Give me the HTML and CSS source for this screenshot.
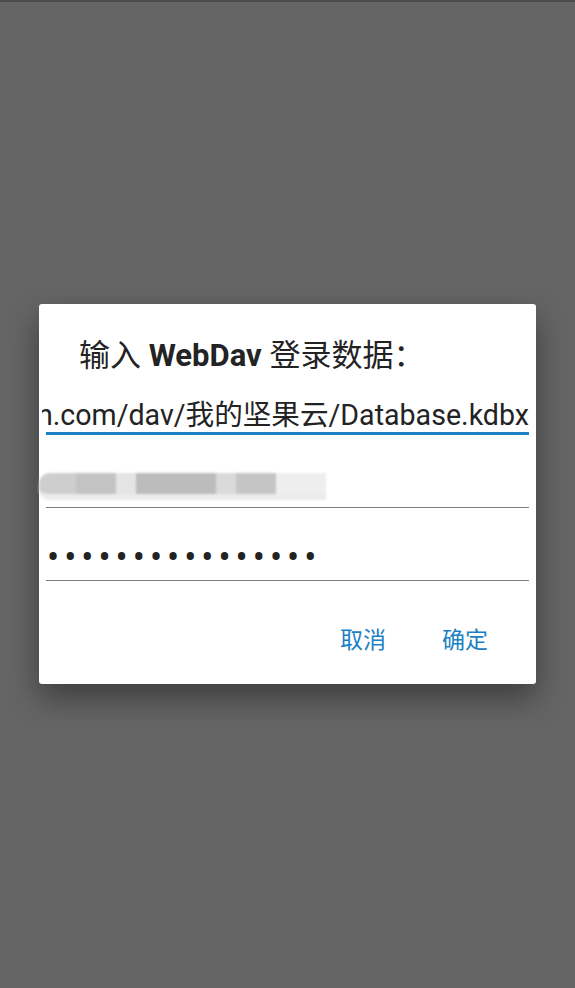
FILE: index.html
```html
<!DOCTYPE html>
<html lang="zh-CN">
<head>
    <meta charset="UTF-8">
    <meta name="viewport" content="width=device-width, initial-scale=1.0">
    <title>WebDav 登录</title>
    <link rel="stylesheet" href="styles.css">
</head>
<body>
<div class="status-strip"></div>
<main class="scrim">
    <form class="dialog" autocomplete="off">
        <h1 class="dialog-title">输入 <b>WebDav</b> 登录数据：</h1>
        <div class="field field-active">
            <div class="field-text">https://dav.jianguoyun.com/dav/我的坚果云/Database.kdbx</div>
        </div>
        <div class="field">
            <!-- 用户名已打码 -->
            <div class="mosaic">
                <span class="m1"></span>
                <span class="m2"></span>
                <span class="m3"></span>
                <span class="m4"></span>
                <span class="m5"></span>
                <span class="m6"></span>
                <span class="m7"></span>
            </div>
        </div>
        <div class="field field-password">
            <div class="field-text">••••••••••••••••</div>
        </div>
        <div class="actions">
            <button type="button" class="btn">取消</button>
            <button type="submit" class="btn">确定</button>
        </div>
    </form>
</main>
</body>
</html>
```

FILE: styles.css
```css
:root {
    --scrim: #656565;
    --accent: #1b80c4;
    --text: #232323;
    --line: #7a7a7a;
}
body {
    margin: 0;
    background: var(--scrim);
    font-family: Roboto, "Noto Sans CJK SC", sans-serif;
    min-height: 988px;
}
.status-strip {
    height: 2px;
    background: #4b4b4b;
}
.scrim {
    padding: 302px 39px 0 39px;
}
.dialog {
    background: #fff;
    border-radius: 3px;
    box-shadow: 0 14px 32px rgba(0,0,0,0.4);
    height: 380px;
    box-sizing: border-box;
    display: flex;
    flex-direction: column;
}
.dialog-title {
    margin: 30px 0 0 0;
    padding-left: 40px;
    font-size: 31px;
    font-weight: 400;
    line-height: 44px;
    color: var(--text);
}
.dialog-title b {
    font-weight: 700;
}
.field {
    margin: 0 7px;
    padding-top: 32px;
    height: 40px;
    border-bottom: 1px solid var(--line);
}
.field-text {
    display: flex;
    justify-content: flex-end;
    white-space: nowrap;
    font-size: 28.6px;
    line-height: 40px;
    color: var(--text);
}
/* active field: text overflows on the left, blue underline */
.field-active {
    margin-left: 3px;
    padding-top: 17px;
    height: 40px;
    border-bottom: none;
    overflow: hidden;
}
.field-active .field-text {
    height: 37px;
    margin-left: 4px;
    border-bottom: 3px solid var(--accent);
}
.field-password {
    padding-top: 32px;
}
.field-password .field-text {
    justify-content: flex-start;
    font-size: 36px;
    letter-spacing: 5px;
    padding: 5px 0 0 1px;
    height: 35px;
    line-height: 26px;
}
.mosaic {
    display: flex;
    margin: 6px 0 0 -7px;
    height: 27px;
    filter: blur(1.2px);
}
.mosaic span {
    height: 21px;
    border-bottom: 6px solid #ebebeb;
}
.m1 { width: 37px; background: #cecece; border-radius: 11px 0 0 11px; }
.m2 { width: 40px; background: #c3c3c3; }
.m3 { width: 20px; background: #e4e4e4; }
.m4 { width: 80px; background: #bcbcbc; }
.m5 { width: 20px; background: #dadada; }
.m6 { width: 40px; background: #c5c5c5; }
.m7 { width: 50px; background: #eeeeee; border-bottom-color: #f3f3f3; }
.actions {
    display: flex;
    justify-content: flex-end;
    align-items: center;
    gap: 28px;
    margin-top: auto;
    padding: 0 34px 22px 0;
    height: 48px;
}
.btn {
    background: none;
    border: none;
    padding: 0 14px;
    font-family: inherit;
    font-size: 23px;
    color: var(--accent);
    cursor: pointer;
}
```
